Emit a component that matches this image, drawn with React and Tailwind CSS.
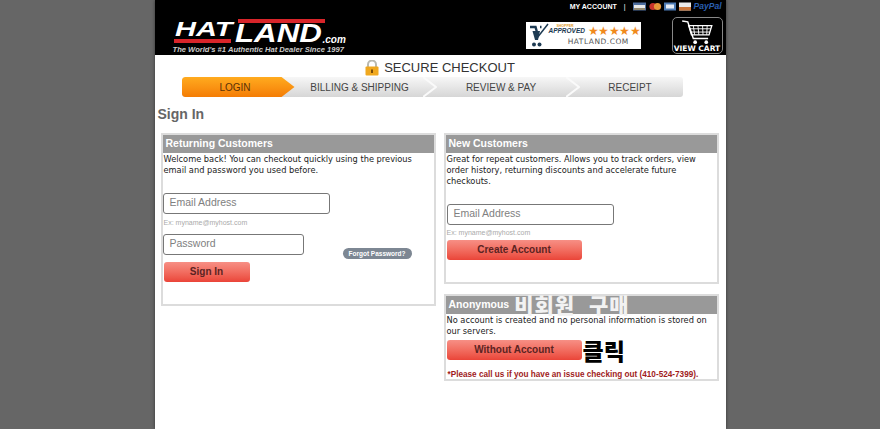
import React from "react";

const arial = "font-['Liberation_Sans',Arial,sans-serif]";
const verdana = "font-['DejaVu_Sans',Verdana,sans-serif]";
const korean = "font-['Noto_Sans_CJK_KR',sans-serif]";

const Lock = () => (
	<svg width="14" height="16" viewBox="0 0 14 16" className="mr-[5px]">
		<path d="M3 7V4.5a4 4 0 0 1 8 0V7" fill="none" stroke="#b9b9b0" strokeWidth="2" />
		<rect x="0.5" y="6.5" width="13" height="9" rx="1" fill="#f0a81e" />
		<rect x="6" y="9.5" width="2" height="3.5" fill="#7a4d08" />
	</svg>
);

const Cart = () => (
	<svg width="36" height="27" viewBox="0 0 36 27" className="mt-[2px]">
		<path d="M2 1 L8 2 L14 20 H30" fill="none" stroke="#fff" strokeWidth="1.6" />
		<path d="M9 6 H34 L31 16 H12 Z" fill="none" stroke="#fff" strokeWidth="1.4" />
		<path d="M14 6 L15.5 16 M19 6 L20 16 M24 6 L24.5 16 M29 6 L28.5 16 M10 9.5 H33 M11 13 H32" stroke="#fff" strokeWidth="1" />
		<circle cx="16" cy="24" r="2" fill="#fff" />
		<circle cx="28" cy="24" r="2" fill="#fff" />
	</svg>
);

const Badge = () => (
	<svg width="20" height="25" viewBox="0 0 20 25" className="shrink-0">
		<path d="M1 4 H6.5 L8.5 11 M11 4 H12.5" fill="none" stroke="#1d3a52" strokeWidth="2.4" />
		<path d="M8 15 L19 1" fill="none" stroke="#1d3a52" strokeWidth="1.5" />
		<path d="M3.5 8 L6 17 H9 L11 8 Z" fill="#1d3a52" />
		<circle cx="5" cy="21.5" r="2" fill="#1d3a52" />
		<circle cx="10.5" cy="21.5" r="2" fill="#1d3a52" />
	</svg>
);

const PayCards = () => (
	<svg width="58" height="9" viewBox="0 0 58 9" className="mr-[3px] -mt-[2px]">
		<rect x="0" y="0.5" width="13" height="8" fill="#4d6d9e" />
		<rect x="1" y="3" width="11" height="3" fill="#e8e8e8" />
		<rect x="1" y="6.5" width="11" height="1" fill="#d9a441" />
		<circle cx="20" cy="4.5" r="3.6" fill="#c8322c" />
		<circle cx="24.5" cy="4.5" r="3.6" fill="#e6963a" />
		<rect x="31" y="0.5" width="12" height="8" fill="#4d7bb5" />
		<rect x="33" y="2.5" width="8" height="4" fill="#e6edf6" />
		<rect x="46" y="0.5" width="12" height="8" fill="#e9e9e9" />
		<rect x="46" y="5" width="12" height="3.5" fill="#c9753a" />
	</svg>
);

const Step = ({ label, width }) => (
	<div className={`flex items-center justify-center h-[20px] text-[10px] text-[#444] ${width}`}>
		{label}
	</div>
);

const Chevron = () => (
	<svg width="14" height="20" viewBox="0 0 14 20" className="shrink-0 -mx-[7px] z-10">
		<path d="M0 0 L13 10 L0 20" fill="none" stroke="#fafafa" strokeWidth="2" />
	</svg>
);

const Card = ({ title, children, className }) => (
	<div className={`border-2 border-[#dcdcdc] bg-white ${className}`}>
		<div className={`h-[18px] bg-[#999] text-white font-bold text-[10.5px] leading-[16px] pl-[3px] ${arial}`}>
			{title}
		</div>
		{children}
	</div>
);

const Copy = ({ children }) => (
	<div className={`px-[1px] pt-[1px] text-[8.25px] leading-[11px] text-[#222] ${verdana}`}>
		{children}
	</div>
);

const Field = ({ placeholder, width }) => (
	<div
		className={`h-[21px] ${width} border-[1.5px] border-[#777] rounded-[3px] bg-white pl-[6px] text-[10.5px] leading-[17px] text-[#808080] ${arial}`}
	>
		{placeholder}
	</div>
);

const RedButton = ({ label, width }) => (
	<button
		className={`block h-[20px] ${width} rounded-[3px] bg-gradient-to-b from-[#f78f85] to-[#ea4438] text-[#5b2322] font-bold text-[10px] leading-[20px] text-center ${arial}`}
	>
		{label}
	</button>
);

const Hint = () => (
	<div className={`text-[7px] leading-[9px] text-[#aaa] ${arial}`}>Ex: myname@myhost.com</div>
);

const App = () => (
	<div className="min-h-screen h-[429px] overflow-hidden bg-[#666] flex justify-center">
		<div className={`w-[571px] h-full bg-white shadow-[0_0_3px_#333] ${arial}`}>
			{/* header */}
			<div className="h-[55px] bg-black flex justify-between">
				<div className="relative w-[195px] italic font-bold text-white leading-none whitespace-nowrap">
					<div className="absolute left-[83px] top-[19px] w-[87px] h-[4px] bg-[#d8252a]" />
					<div className="absolute left-[19px] top-[39px] w-[57px] h-[4px] bg-[#d8252a]" />
					<span className="absolute left-[20px] top-[18px] text-[21px] origin-left scale-x-[1.38]">HAT</span>
					<span className="absolute left-[80px] top-[22px] text-[25px] leading-[23px] origin-left scale-x-[1.25]">LAND</span>
					<span className="absolute left-[168px] top-[35px] text-[10px]">.com</span>
					<span className="absolute left-[18px] top-[46px] text-[7.6px] leading-[8px] text-[#ccc]">
						The World's #1 Authentic Hat Dealer Since 1997
					</span>
				</div>
				<div className="flex flex-col items-end pr-[3px]">
					<div className="flex items-center h-[12px] mt-[1px] pr-[1px] text-white text-[7px] font-bold">
						<span>MY ACCOUNT</span>
						<span className="mx-[7px] font-normal">|</span>
						<PayCards />
						<span className="text-[8.5px] italic text-[#2a5fb0] -mt-[2px]">PayPal</span>
					</div>
					<div className="flex items-start mt-[4px]">
						<div className="w-[115px] h-[27px] mt-[5px] bg-white flex items-center pl-[3px]">
							<Badge />
							<div className="flex flex-col items-center">
								<div className="flex items-center leading-none">
									<div className="relative text-[6.5px] italic font-bold text-[#1d3a52]">
										<span className="absolute left-[8px] -top-[3px] text-[3.5px] leading-[3px] text-[#e09a2b] not-italic">SHOPPER</span>
										APPROVED
									</div>
									<span className="text-[12px] leading-[12px] text-[#f08a1c] tracking-[-0.6px] ml-[3px]">★★★★★</span>
								</div>
								<div className={`ml-[8px] text-[7.5px] leading-[9px] text-[#555] tracking-[0.5px] ${verdana}`}>HATLAND.COM</div>
							</div>
						</div>
						<div className="ml-[31px] w-[51px] h-[37px] border border-[#888] rounded-[5px] flex flex-col items-center text-white overflow-hidden">
							<Cart />
							<div className={`text-[7.5px] leading-[8px] font-bold ${verdana}`}>VIEW CART</div>
						</div>
					</div>
				</div>
			</div>

			{/* secure checkout */}
			<div className="h-[22px] flex items-center justify-center pt-[4px] text-[13px] text-[#333]">
				<Lock />
				SECURE CHECKOUT
			</div>

			{/* steps */}
			<div className="flex ml-[27px] w-[501px] h-[20px] rounded-[3px] overflow-hidden bg-gradient-to-b from-[#f7f7f7] to-[#d6d6d6]">
				<div className="h-[20px] w-[113px] bg-gradient-to-b from-[#ffab1e] to-[#f47c04] text-[#5a3206] text-[10px] flex items-center justify-center pr-[6px] [clip-path:polygon(0_0,100px_0,113px_50%,100px_100%,0_100%)] rounded-l-[3px]">
					LOGIN
				</div>
				<Step label="BILLING & SHIPPING" width="w-[135px] pr-[5px]" />
				<Chevron />
				<Step label="REVIEW & PAY" width="w-[143px]" />
				<Chevron />
				<Step label="RECEIPT" width="w-[110px] pl-[5px]" />
			</div>

			<h1 className="mt-[8px] pl-[3px] text-[14px] leading-[18px] font-bold text-[#666]">Sign In</h1>

			<div className="flex items-start mt-[10px] pl-[6px]">
				<Card title="Returning Customers" className="w-[275px] h-[173px]">
					<Copy>Welcome back! You can checkout quickly using the previous email and password you used before.</Copy>
					<div className="mt-[17px]">
						<Field placeholder="Email Address" width="w-[167px]" />
						<div className="mt-[4px] pl-[1px]"><Hint /></div>
						<div className="flex items-start mt-[7px]">
							<Field placeholder="Password" width="w-[141px]" />
							<div className="ml-[39px] mt-[14px] w-[69px] h-[11px] rounded-full bg-[#7d8793] text-white text-[6.5px] leading-[11px] font-bold text-center">
								Forgot Password?
							</div>
						</div>
						<div className="mt-[3px] pl-[1px]"><RedButton label="Sign In" width="w-[86px]" /></div>
					</div>
				</Card>
				<div className="ml-[8px] w-[275px]">
					<Card title="New Customers" className="h-[151px]">
						<Copy>Great for repeat customers. Allows you to track orders, view order history, returning discounts and accelerate future checkouts.</Copy>
						<div className="pl-[1px] mt-[17px]">
							<Field placeholder="Email Address" width="w-[167px]" />
							<div className="mt-[3px]"><Hint /></div>
							<RedButton label="Create Account" width="w-[135px] mt-[3px]" />
						</div>
					</Card>
					<Card
						className="mt-[10px] h-[87px]"
						title={
							<span className="flex items-center h-[16px]">
								Anonymous
								<span className={`ml-[5px] text-[21px] leading-[16px] font-black whitespace-nowrap text-[#f2f2f2] tracking-[1px] [word-spacing:8px] ${korean}`}>비회원 구매</span>
							</span>
						}
					>
						<Copy>No account is created and no personal information is stored on our servers.</Copy>
						<div className="flex items-center pl-[1px] mt-[3px]">
							<RedButton label="Without Account" width="w-[135px]" />
							<span className={`ml-[1px] text-[23px] leading-[20px] font-black text-black ${korean}`}>클릭</span>
						</div>
						<div className="pl-[2px] mt-[9px] text-[8.2px] leading-[11px] font-bold text-[#a01c1c] whitespace-nowrap">
							*Please call us if you have an issue checking out (410-524-7399).
						</div>
					</Card>
				</div>
			</div>
		</div>
	</div>
);

export default App;
